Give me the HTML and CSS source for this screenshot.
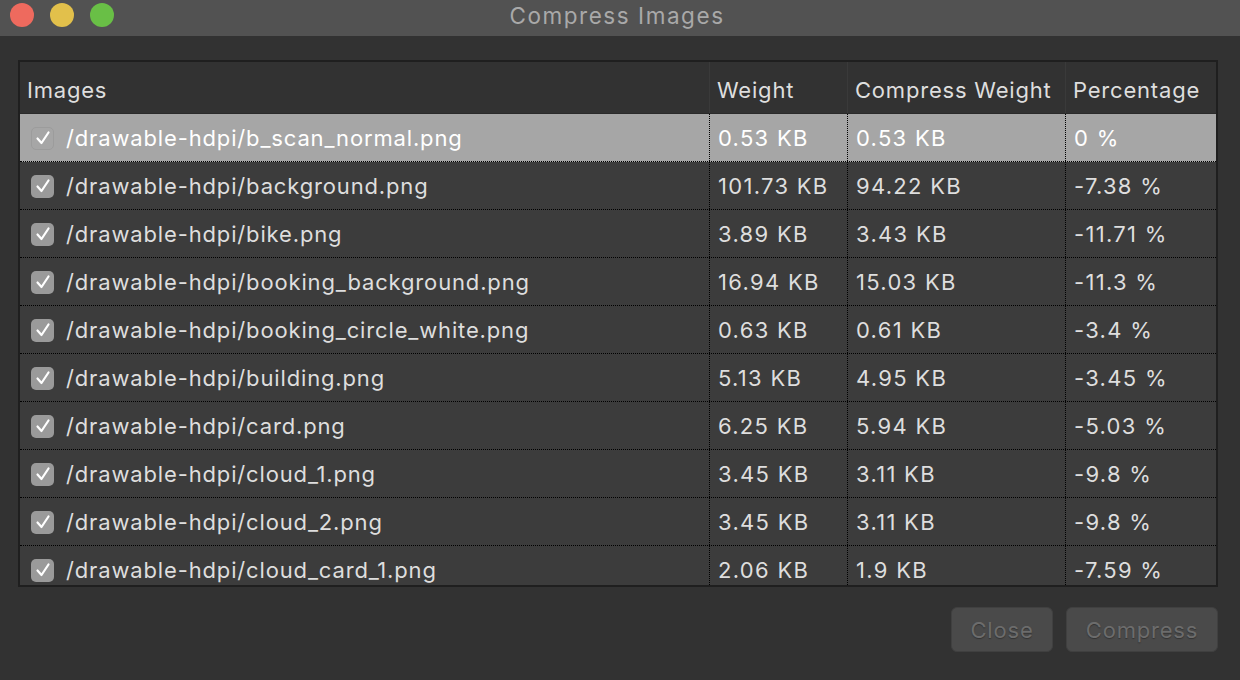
FILE: index.html
```html
<!DOCTYPE html>
<html>
<head>
<meta charset="utf-8">
<link rel="stylesheet" href="styles.css">
</head>
<body>
<div class="window">
  <div class="titlebar">
    <div class="lights">
      <span class="light red"></span>
      <span class="light yellow"></span>
      <span class="light green"></span>
    </div>
    <div class="title">Compress Images</div>
  </div>
  <div class="content">
    <div class="table">
      <div class="thead">
        <div class="th">Images</div>
        <div class="th">Weight</div>
        <div class="th">Compress Weight</div>
        <div class="th">Percentage</div>
      </div>
      <div class="tbody">
        <div class="tr selected">
          <div class="td name"><span class="cb"><svg viewBox="0 0 22 22"><path d="M5.5 11.5 L9.5 16 L16.5 5.5"/></svg></span>/drawable-hdpi/b_scan_normal.png</div>
          <div class="td">0.53 KB</div><div class="td">0.53 KB</div><div class="td">0 %</div>
        </div>
        <div class="tr">
          <div class="td name"><span class="cb"><svg viewBox="0 0 22 22"><path d="M5.5 11.5 L9.5 16 L16.5 5.5"/></svg></span>/drawable-hdpi/background.png</div>
          <div class="td">101.73 KB</div><div class="td">94.22 KB</div><div class="td">-7.38 %</div>
        </div>
        <div class="tr">
          <div class="td name"><span class="cb"><svg viewBox="0 0 22 22"><path d="M5.5 11.5 L9.5 16 L16.5 5.5"/></svg></span>/drawable-hdpi/bike.png</div>
          <div class="td">3.89 KB</div><div class="td">3.43 KB</div><div class="td">-11.71 %</div>
        </div>
        <div class="tr">
          <div class="td name"><span class="cb"><svg viewBox="0 0 22 22"><path d="M5.5 11.5 L9.5 16 L16.5 5.5"/></svg></span>/drawable-hdpi/booking_background.png</div>
          <div class="td">16.94 KB</div><div class="td">15.03 KB</div><div class="td">-11.3 %</div>
        </div>
        <div class="tr">
          <div class="td name"><span class="cb"><svg viewBox="0 0 22 22"><path d="M5.5 11.5 L9.5 16 L16.5 5.5"/></svg></span>/drawable-hdpi/booking_circle_white.png</div>
          <div class="td">0.63 KB</div><div class="td">0.61 KB</div><div class="td">-3.4 %</div>
        </div>
        <div class="tr">
          <div class="td name"><span class="cb"><svg viewBox="0 0 22 22"><path d="M5.5 11.5 L9.5 16 L16.5 5.5"/></svg></span>/drawable-hdpi/building.png</div>
          <div class="td">5.13 KB</div><div class="td">4.95 KB</div><div class="td">-3.45 %</div>
        </div>
        <div class="tr">
          <div class="td name"><span class="cb"><svg viewBox="0 0 22 22"><path d="M5.5 11.5 L9.5 16 L16.5 5.5"/></svg></span>/drawable-hdpi/card.png</div>
          <div class="td">6.25 KB</div><div class="td">5.94 KB</div><div class="td">-5.03 %</div>
        </div>
        <div class="tr">
          <div class="td name"><span class="cb"><svg viewBox="0 0 22 22"><path d="M5.5 11.5 L9.5 16 L16.5 5.5"/></svg></span>/drawable-hdpi/cloud_1.png</div>
          <div class="td">3.45 KB</div><div class="td">3.11 KB</div><div class="td">-9.8 %</div>
        </div>
        <div class="tr">
          <div class="td name"><span class="cb"><svg viewBox="0 0 22 22"><path d="M5.5 11.5 L9.5 16 L16.5 5.5"/></svg></span>/drawable-hdpi/cloud_2.png</div>
          <div class="td">3.45 KB</div><div class="td">3.11 KB</div><div class="td">-9.8 %</div>
        </div>
        <div class="tr">
          <div class="td name"><span class="cb"><svg viewBox="0 0 22 22"><path d="M5.5 11.5 L9.5 16 L16.5 5.5"/></svg></span>/drawable-hdpi/cloud_card_1.png</div>
          <div class="td">2.06 KB</div><div class="td">1.9 KB</div><div class="td">-7.59 %</div>
        </div>
      </div>
    </div>
    <div class="actions">
      <button class="btn close">Close</button>
      <button class="btn compress">Compress</button>
    </div>
  </div>
</div>
</body>
</html>
```

FILE: styles.css
```css
* { box-sizing: border-box; }
html, body {
  margin: 0;
  padding: 0;
  background: #323232;
  width: 1240px;
  height: 680px;
  overflow: hidden;
  font-family: Inter, "Noto Sans", sans-serif;
}
.window {
  width: 1240px;
  height: 680px;
  display: flex;
  flex-direction: column;
}
.titlebar {
  height: 36px;
  background: #525252;
  position: relative;
  display: flex;
  align-items: center;
  justify-content: center;
  flex-shrink: 0;
}
.lights {
  position: absolute;
  left: 10px;
  top: 3px;
  display: flex;
  gap: 16px;
}
.light {
  width: 24px;
  height: 24px;
  border-radius: 50%;
  display: block;
}
.red { background: #ee6a5e; }
.yellow { background: #e2c04b; }
.green { background: #69bf46; }
.title {
  color: #a9a9a9;
  font-size: 22.5px;
  letter-spacing: 1.55px;
  margin-top: -6px;
  margin-left: -6px;
}
.content {
  flex: 1;
  padding: 24px 22px 0 18px;
  display: flex;
  flex-direction: column;
}
.table {
  width: 1200px;
  height: 527px;
  border: 2px solid #1f1f1f;
  background: #323232;
  display: flex;
  flex-direction: column;
  overflow: hidden;
}
.thead, .tr {
  display: grid;
  grid-template-columns: 689px 138px 218px 151px;
}
.thead {
  height: 52px;
  background: #323232;
  border-bottom: 1px solid #2a2a2a;
  flex-shrink: 0;
}
.th {
  color: #dedede;
  font-size: 22px;
  letter-spacing: 0.8px;
  padding-left: 7px;
  display: flex;
  align-items: center;
  padding-top: 4px;
  border-left: 1px solid #3a3a3a;
  white-space: nowrap;
}
.th:first-child { border-left: none; }
.tbody {
  flex: 1;
  overflow: hidden;
  background: #3c3c3c;
}
.tr {
  height: 48px;
  background: #3c3c3c;
  border-bottom: 1px dotted #000;
}
.tr.selected {
  background: #a6a6a6;
}
.td {
  color: #dedede;
  font-size: 22px;
  letter-spacing: 1.3px;
  padding-left: 8px;
  padding-top: 1px;
  display: flex;
  align-items: center;
  border-left: 1px dotted #000;
  white-space: nowrap;
}
.td.name {
  border-left: none;
  padding-left: 11px;
  letter-spacing: 0.85px;
}
.selected .td { color: #ffffff; }
.cb {
  width: 23px;
  height: 23px;
  border-radius: 5px;
  background: #9a9a9a;
  margin-right: 12px;
  display: inline-flex;
  align-items: center;
  justify-content: center;
  flex-shrink: 0;
}
.cb svg {
  width: 22px;
  height: 22px;
  flex-shrink: 0;
}
.cb path {
  fill: none;
  stroke: #ffffff;
  stroke-width: 2.2;
  stroke-linecap: round;
  stroke-linejoin: round;
}
.selected .cb {
  background: transparent;
  border: 1px solid #9c9c9c;
}
.actions {
  display: flex;
  justify-content: flex-end;
  gap: 13px;
  margin-top: 20px;
}
.btn {
  height: 45px;
  border-radius: 6px;
  background: #4a4a4a;
  border: 1px solid #404040;
  color: #6c6c6c;
  font-family: Inter, "Noto Sans", sans-serif;
  font-size: 22px;
  letter-spacing: 0.8px;
  text-shadow: 0 1px 1px #333;
  padding: 0;
}
.btn.close { width: 102px; margin-left: -1px; }
.btn.compress { width: 152px; }
```
